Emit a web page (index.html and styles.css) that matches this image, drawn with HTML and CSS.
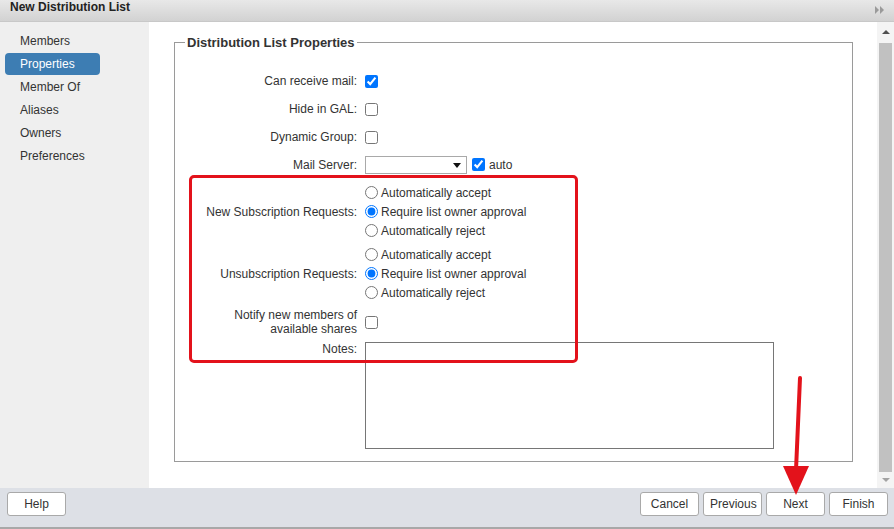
FILE: index.html
```html
<!DOCTYPE html>
<html lang="en">
<head>
  <meta charset="UTF-8">
  <title>New Distribution List</title>
  <link rel="stylesheet" href="styles.css">
</head>
<body>
  <div class="dialog">
    <div class="titlebar">
      <span class="title">New Distribution List</span>
      <svg class="expand" width="10" height="8" viewBox="0 0 10 8">
        <polygon points="0,0 4,4 0,8" fill="#9a9a9a"/>
        <polygon points="5,0 9,4 5,8" fill="#9a9a9a"/>
      </svg>
    </div>

    <div class="main">
      <ul class="nav">
        <li>Members</li>
        <li class="active">Properties</li>
        <li>Member Of</li>
        <li>Aliases</li>
        <li>Owners</li>
        <li>Preferences</li>
      </ul>

      <div class="content">
        <fieldset class="props">
          <legend>Distribution List Properties</legend>

          <div class="row">
            <label>Can receive mail:</label>
            <div><input type="checkbox" checked></div>
          </div>
          <div class="row">
            <label>Hide in GAL:</label>
            <div><input type="checkbox"></div>
          </div>
          <div class="row">
            <label>Dynamic Group:</label>
            <div><input type="checkbox"></div>
          </div>
          <div class="row row-server">
            <label>Mail Server:</label>
            <div class="inline">
              <span class="select-wrap"><select><option></option></select></span>
              <input type="checkbox" checked>
              <span>auto</span>
            </div>
          </div>

          <div class="row group">
            <label>New Subscription Requests:</label>
            <div class="radios">
              <label class="opt"><input type="radio" name="sub"> Automatically accept</label>
              <label class="opt"><input type="radio" name="sub" checked> Require list owner approval</label>
              <label class="opt"><input type="radio" name="sub"> Automatically reject</label>
            </div>
          </div>
          <div class="row group">
            <label>Unsubscription Requests:</label>
            <div class="radios">
              <label class="opt"><input type="radio" name="unsub"> Automatically accept</label>
              <label class="opt"><input type="radio" name="unsub" checked> Require list owner approval</label>
              <label class="opt"><input type="radio" name="unsub"> Automatically reject</label>
            </div>
          </div>

          <div class="row notify">
            <label>Notify new members of<br>available shares</label>
            <div><input type="checkbox"></div>
          </div>
          <div class="row notes">
            <label>Notes:</label>
            <div><textarea></textarea></div>
          </div>
        </fieldset>
      </div>

      <div class="scrollbar">
        <span class="arrow up"></span>
        <span class="thumb"></span>
        <span class="arrow down"></span>
      </div>
    </div>

    <div class="footer">
      <button>Help</button>
      <div class="actions">
        <button>Cancel</button>
        <button>Previous</button>
        <button>Next</button>
        <button>Finish</button>
      </div>
    </div>

    <!-- annotations drawn over the screenshot -->
    <div class="highlight"></div>
    <svg class="pointer" width="40" height="130" viewBox="0 0 40 130">
      <line x1="24" y1="4" x2="20" y2="96" stroke="#e3121b" stroke-width="4" stroke-linecap="round"/>
      <polygon points="7,92 33,92 20,121" fill="#e3121b"/>
    </svg>
  </div>
</body>
</html>
```

FILE: styles.css
```css
* {
  box-sizing: border-box;
}

html, body {
  margin: 0;
  padding: 0;
}

body {
  font-family: 'Liberation Sans', Arial, sans-serif;
  font-size: 12px;
  color: #333333;
  background-color: #ffffff;
}

.dialog {
  position: relative;
  width: 894px;
  height: 529px;
  display: flex;
  flex-direction: column;
  overflow: hidden;
}

.titlebar {
  height: 22px;
  display: flex;
  justify-content: space-between;
  align-items: flex-start;
  padding: 0 9px 0 10px;
  background: linear-gradient(#e8e8e8, #d2d2d2);
  border-bottom: 1px solid #c8c8c8;
}

.title {
  font-weight: bold;
  color: #222222;
  line-height: 14px;
}

.expand {
  margin-top: 6px;
}

.main {
  flex: 1;
  display: flex;
  min-height: 0;
}

.nav {
  width: 149px;
  margin: 0;
  padding: 8px 0 0 5px;
  list-style: none;
  background-color: #efefef;
}

.nav li {
  width: 95px;
  height: 23px;
  line-height: 23px;
  padding-left: 15px;
  color: #333333;
  border-radius: 4px;
}

.nav li.active {
  background-color: #3d7db3;
  color: #ffffff;
  height: 22px;
  line-height: 22px;
  margin-bottom: 1px;
}

.content {
  flex: 1;
  padding: 13px 24px 26px 25px;
}

.props {
  height: 100%;
  margin: 0;
  padding: 17px 0 0 10px;
  border: 1px solid #9a9a9a;
}

.props legend {
  padding: 0 2px;
  font-size: 13px;
  font-weight: bold;
  color: #333333;
}

.row {
  display: grid;
  grid-template-columns: 172px auto;
  column-gap: 8px;
  align-items: center;
  height: 28px;
}

.row > label {
  text-align: right;
}

.row-server {
  height: 27px;
}

.group {
  height: 57px;
  margin-top: 5px;
}

.notify {
  margin-top: 6px;
  line-height: 14px;
}

.notes {
  height: auto;
  margin-top: 6px;
  align-items: start;
}

.notes > label {
  line-height: 14px;
}

input[type="checkbox"],
input[type="radio"] {
  width: 13px;
  height: 13px;
  margin: 0;
  vertical-align: middle;
}

.inline {
  display: flex;
  align-items: center;
  gap: 4px;
}

.select-wrap {
  position: relative;
  display: inline-block;
  margin-right: 1px;
}

.select-wrap::after {
  content: "";
  position: absolute;
  right: 6px;
  top: 7px;
  border-left: 4px solid transparent;
  border-right: 4px solid transparent;
  border-top: 5px solid #111111;
}

.select-wrap select {
  appearance: none;
  width: 102px;
  height: 18px;
  border: 1px solid #a9a9a9;
  border-radius: 0;
  background-color: #ffffff;
  display: block;
}

.radios {
  display: flex;
  flex-direction: column;
}

.opt {
  display: flex;
  align-items: center;
  gap: 3px;
  height: 19px;
}

textarea {
  display: block;
  width: 409px;
  height: 107px;
  border: 1px solid #767676;
  resize: none;
}

.scrollbar {
  width: 17px;
  display: flex;
  flex-direction: column;
  align-items: center;
  background-color: #f4f4f4;
  padding: 8px 0 6px;
}

.arrow {
  width: 0;
  height: 0;
  border-left: 4px solid transparent;
  border-right: 4px solid transparent;
}

.arrow.up {
  border-bottom: 4px solid #505050;
}

.arrow.down {
  border-top: 4px solid #a3a3a3;
}

.thumb {
  flex: 1;
  width: 13px;
  margin: 9px 0 6px;
  background-color: #c1c1c1;
}

.footer {
  height: 41px;
  display: flex;
  justify-content: space-between;
  align-items: flex-start;
  padding: 4px 6px 0 7px;
  background-color: #dde0e6;
  border-bottom: 2px solid #a8a8a8;
}

.actions {
  display: flex;
  gap: 4px;
}

.footer button {
  width: 59px;
  height: 24px;
  font-family: 'Liberation Sans', Arial, sans-serif;
  font-size: 12px;
  color: #333333;
  background-color: #ffffff;
  border: 1px solid #a9a9a9;
  border-radius: 3px;
}

.highlight {
  position: absolute;
  left: 189px;
  top: 175px;
  width: 389px;
  height: 188px;
  border: 3px solid #e3121b;
  border-radius: 5px;
}

.pointer {
  position: absolute;
  left: 776px;
  top: 374px;
}
```
